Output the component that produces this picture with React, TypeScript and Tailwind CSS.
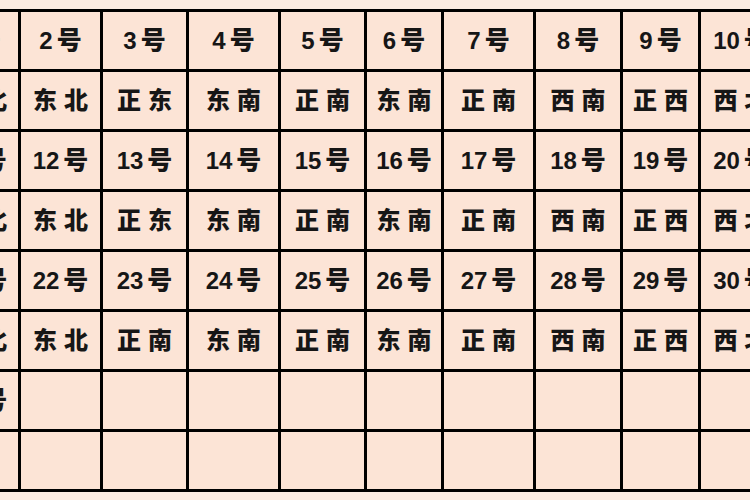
import React from "react";

const numRow = (start: number) =>
  Array.from({ length: 10 }, (_, i) => ({ kind: "num", value: String(start + i) }));

const dirRow = (dirs: string[]) => dirs.map((d) => ({ kind: "dir", value: d }));

const emptyRow = (first?: string) =>
  Array.from({ length: 10 }, (_, i) =>
    i === 0 && first ? { kind: "num", value: first } : { kind: "empty", value: "" }
  );

const rows = [
  numRow(1),
  dirRow(["正北", "东北", "正东", "东南", "正南", "东南", "正南", "西南", "正西", "西北"]),
  numRow(11),
  dirRow(["正北", "东北", "正东", "东南", "正南", "东南", "正南", "西南", "正西", "西北"]),
  numRow(21),
  dirRow(["正北", "东北", "正南", "东南", "正南", "东南", "正南", "西南", "正西", "西北"]),
  emptyRow("31"),
  emptyRow(),
];

const Cell = ({ kind, value }: { kind: string; value: string }) => {
  if (kind === "num") {
    return (
      <div className="h-[57px] bg-[#fce4d6] flex items-center justify-center text-[#161616] whitespace-nowrap">
        <span className="text-[24px] font-bold">{value}</span>
        <span className="ml-[4px] text-[25px] font-black">号</span>
      </div>
    );
  }
  if (kind === "dir") {
    return (
      <div className="h-[57px] bg-[#fce4d6] flex items-center justify-center gap-[7px] text-[24px] font-black text-[#161616] whitespace-nowrap">
        {value.split("").map((ch, i) => (
          <span key={i}>{ch}</span>
        ))}
      </div>
    );
  }
  return <div className="h-[57px] bg-[#fce4d6]" />;
};

export default function App() {
  return (
    <div
      className="w-[750px] h-[500px] overflow-hidden bg-[#fbece2] pt-[9px]"
      style={{ fontFamily: '"Liberation Sans", "Noto Sans CJK SC", sans-serif' }}
    >
      <div className="ml-[-62px] w-max grid grid-cols-[77px_79px_83px_89px_83px_74px_89px_84px_75px_80px] gap-[3px] p-[3px] bg-black">
        {rows.map((row, r) =>
          row.map((cell, c) => <Cell key={`${r}-${c}`} kind={cell.kind} value={cell.value} />)
        )}
      </div>
    </div>
  );
}
